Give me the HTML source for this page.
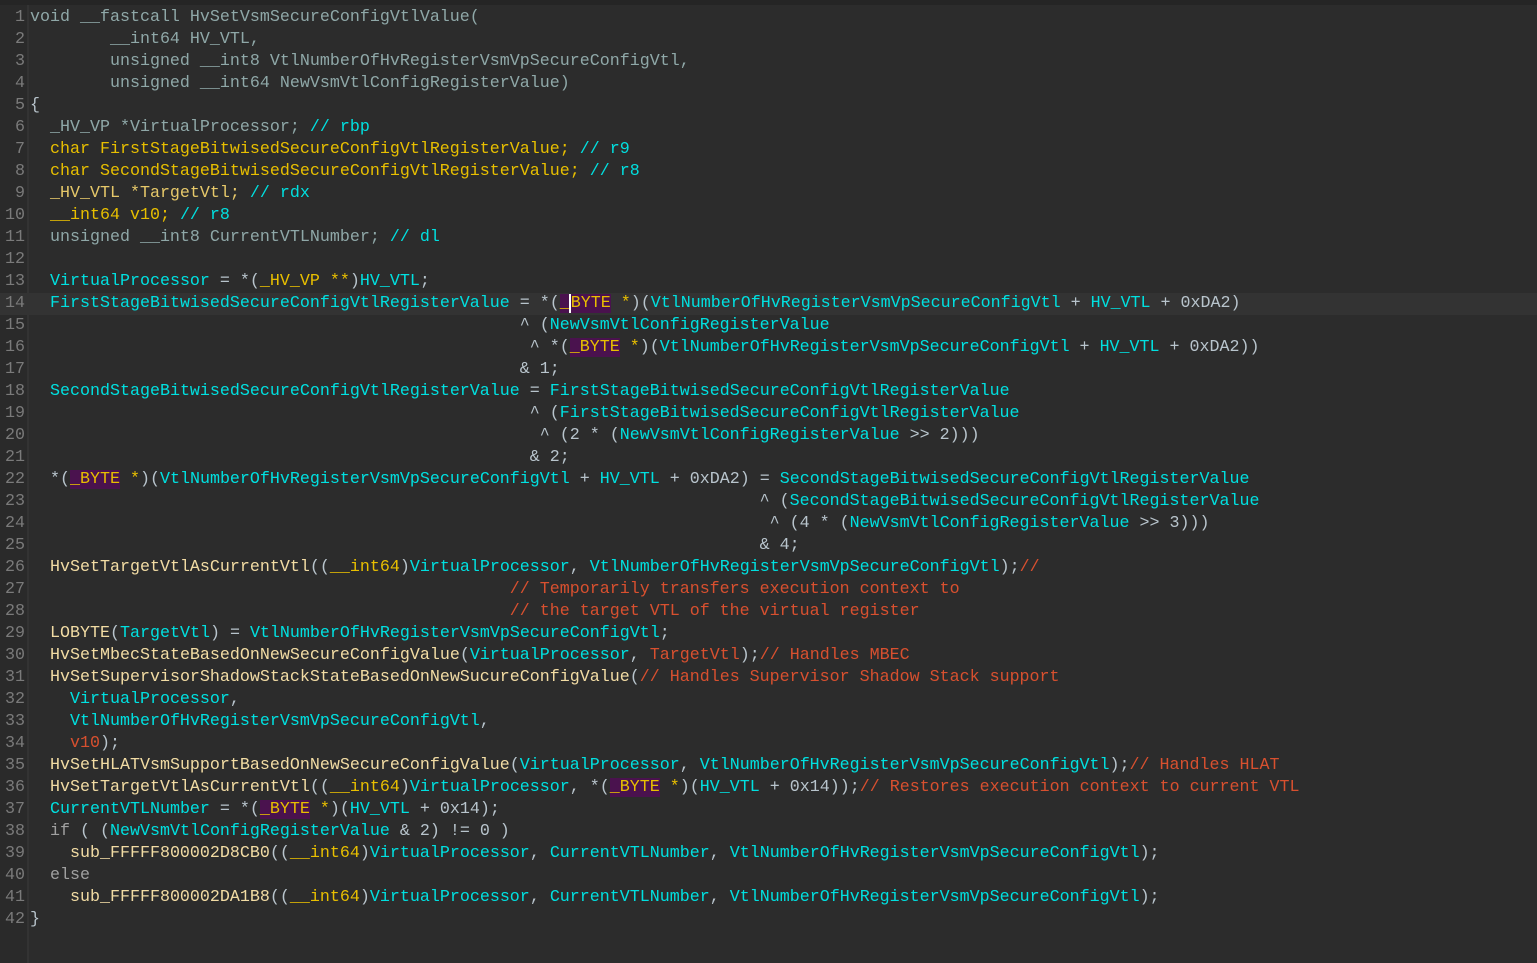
<!DOCTYPE html>
<html><head><meta charset="utf-8"><style>
html,body{margin:0;padding:0;background:#2c2c2c;width:1537px;height:963px;overflow:hidden}
.top{position:absolute;left:0;top:0;width:1537px;height:5px;background:#252525}
.gut{position:absolute;left:0;top:5px;width:27px;height:958px;background:#2a2a2a;border-right:2px solid #333}
.code{position:absolute;left:0;top:7px;font-family:"Liberation Mono",monospace;font-size:16.67px;line-height:22px;color:#c0c8cc}
.l{height:22px;position:relative;width:1537px;white-space:pre}
.l.hl{background:#333333}
.n{display:inline-block;width:25px;text-align:right;color:#7a7a7a;margin-right:5px}
.k{color:#8fa8a8}.v{color:#00e0e0}.f{color:#f2dca4}.t{color:#e8bf00}.y{color:#e6c86a}
.c{color:#d8502f}.p{color:#b8c4cc}.g{color:#a0a0a0}
.b{background:#4a124e;color:#e8bf00}
.cur{border-left:2px solid #fff;margin-left:-1px}
</style></head><body>
<div class="top"></div><div class="gut"></div>
<div class="code"><div class="l"><span class="n">1</span><span class="k">void __fastcall HvSetVsmSecureConfigVtlValue(</span></div><div class="l"><span class="n">2</span><span class="k">        __int64 HV_VTL,</span></div><div class="l"><span class="n">3</span><span class="k">        unsigned __int8 VtlNumberOfHvRegisterVsmVpSecureConfigVtl,</span></div><div class="l"><span class="n">4</span><span class="k">        unsigned __int64 NewVsmVtlConfigRegisterValue)</span></div><div class="l"><span class="n">5</span><span class="p">{</span></div><div class="l"><span class="n">6</span><span class="k">  _HV_VP *VirtualProcessor; </span><span class="v">// rbp</span></div><div class="l"><span class="n">7</span><span class="t">  char FirstStageBitwisedSecureConfigVtlRegisterValue; </span><span class="v">// r9</span></div><div class="l"><span class="n">8</span><span class="t">  char SecondStageBitwisedSecureConfigVtlRegisterValue; </span><span class="v">// r8</span></div><div class="l"><span class="n">9</span><span class="y">  _HV_VTL *TargetVtl; </span><span class="v">// rdx</span></div><div class="l"><span class="n">10</span><span class="t">  __int64 v10; </span><span class="v">// r8</span></div><div class="l"><span class="n">11</span><span class="k">  unsigned __int8 CurrentVTLNumber; </span><span class="v">// dl</span></div><div class="l"><span class="n">12</span></div><div class="l"><span class="n">13</span>  <span class="v">VirtualProcessor</span><span class="p"> = *(</span><span class="t">_HV_VP **</span><span class="p">)</span><span class="v">HV_VTL</span><span class="p">;</span></div><div class="l hl"><span class="n">14</span>  <span class="v">FirstStageBitwisedSecureConfigVtlRegisterValue</span><span class="p"> = *(</span><span class="b">_<span class="cur"></span>BYTE</span><span class="t"> *</span><span class="p">)(</span><span class="v">VtlNumberOfHvRegisterVsmVpSecureConfigVtl</span><span class="p"> + </span><span class="v">HV_VTL</span><span class="p"> + 0xDA2)</span></div><div class="l"><span class="n">15</span><span class="p">                                                 ^ (</span><span class="v">NewVsmVtlConfigRegisterValue</span></div><div class="l"><span class="n">16</span><span class="p">                                                  ^ *(</span><span class="b">_BYTE</span><span class="t"> *</span><span class="p">)(</span><span class="v">VtlNumberOfHvRegisterVsmVpSecureConfigVtl</span><span class="p"> + </span><span class="v">HV_VTL</span><span class="p"> + 0xDA2))</span></div><div class="l"><span class="n">17</span><span class="p">                                                 &amp; 1;</span></div><div class="l"><span class="n">18</span>  <span class="v">SecondStageBitwisedSecureConfigVtlRegisterValue</span><span class="p"> = </span><span class="v">FirstStageBitwisedSecureConfigVtlRegisterValue</span></div><div class="l"><span class="n">19</span><span class="p">                                                  ^ (</span><span class="v">FirstStageBitwisedSecureConfigVtlRegisterValue</span></div><div class="l"><span class="n">20</span><span class="p">                                                   ^ (2 * (</span><span class="v">NewVsmVtlConfigRegisterValue</span><span class="p"> &gt;&gt; 2)))</span></div><div class="l"><span class="n">21</span><span class="p">                                                  &amp; 2;</span></div><div class="l"><span class="n">22</span><span class="p">  *(</span><span class="b">_BYTE</span><span class="t"> *</span><span class="p">)(</span><span class="v">VtlNumberOfHvRegisterVsmVpSecureConfigVtl</span><span class="p"> + </span><span class="v">HV_VTL</span><span class="p"> + 0xDA2) = </span><span class="v">SecondStageBitwisedSecureConfigVtlRegisterValue</span></div><div class="l"><span class="n">23</span><span class="p">                                                                         ^ (</span><span class="v">SecondStageBitwisedSecureConfigVtlRegisterValue</span></div><div class="l"><span class="n">24</span><span class="p">                                                                          ^ (4 * (</span><span class="v">NewVsmVtlConfigRegisterValue</span><span class="p"> &gt;&gt; 3)))</span></div><div class="l"><span class="n">25</span><span class="p">                                                                         &amp; 4;</span></div><div class="l"><span class="n">26</span>  <span class="f">HvSetTargetVtlAsCurrentVtl</span><span class="p">((</span><span class="t">__int64</span><span class="p">)</span><span class="v">VirtualProcessor</span><span class="p">, </span><span class="v">VtlNumberOfHvRegisterVsmVpSecureConfigVtl</span><span class="p">);</span><span class="c">//</span></div><div class="l"><span class="n">27</span><span class="c">                                                // Temporarily transfers execution context to</span></div><div class="l"><span class="n">28</span><span class="c">                                                // the target VTL of the virtual register</span></div><div class="l"><span class="n">29</span>  <span class="f">LOBYTE</span><span class="p">(</span><span class="v">TargetVtl</span><span class="p">) = </span><span class="v">VtlNumberOfHvRegisterVsmVpSecureConfigVtl</span><span class="p">;</span></div><div class="l"><span class="n">30</span>  <span class="f">HvSetMbecStateBasedOnNewSecureConfigValue</span><span class="p">(</span><span class="v">VirtualProcessor</span><span class="p">, </span><span class="c">TargetVtl</span><span class="p">);</span><span class="c">// Handles MBEC</span></div><div class="l"><span class="n">31</span>  <span class="f">HvSetSupervisorShadowStackStateBasedOnNewSucureConfigValue</span><span class="p">(</span><span class="c">// Handles Supervisor Shadow Stack support</span></div><div class="l"><span class="n">32</span>    <span class="v">VirtualProcessor</span><span class="p">,</span></div><div class="l"><span class="n">33</span>    <span class="v">VtlNumberOfHvRegisterVsmVpSecureConfigVtl</span><span class="p">,</span></div><div class="l"><span class="n">34</span>    <span class="c">v10</span><span class="p">);</span></div><div class="l"><span class="n">35</span>  <span class="f">HvSetHLATVsmSupportBasedOnNewSecureConfigValue</span><span class="p">(</span><span class="v">VirtualProcessor</span><span class="p">, </span><span class="v">VtlNumberOfHvRegisterVsmVpSecureConfigVtl</span><span class="p">);</span><span class="c">// Handles HLAT</span></div><div class="l"><span class="n">36</span>  <span class="f">HvSetTargetVtlAsCurrentVtl</span><span class="p">((</span><span class="t">__int64</span><span class="p">)</span><span class="v">VirtualProcessor</span><span class="p">, *(</span><span class="b">_BYTE</span><span class="t"> *</span><span class="p">)(</span><span class="v">HV_VTL</span><span class="p"> + 0x14));</span><span class="c">// Restores execution context to current VTL</span></div><div class="l"><span class="n">37</span>  <span class="v">CurrentVTLNumber</span><span class="p"> = *(</span><span class="b">_BYTE</span><span class="t"> *</span><span class="p">)(</span><span class="v">HV_VTL</span><span class="p"> + 0x14);</span></div><div class="l"><span class="n">38</span>  <span class="g">if</span><span class="p"> ( (</span><span class="v">NewVsmVtlConfigRegisterValue</span><span class="p"> &amp; 2) != 0 )</span></div><div class="l"><span class="n">39</span>    <span class="f">sub_FFFFF800002D8CB0</span><span class="p">((</span><span class="t">__int64</span><span class="p">)</span><span class="v">VirtualProcessor</span><span class="p">, </span><span class="v">CurrentVTLNumber</span><span class="p">, </span><span class="v">VtlNumberOfHvRegisterVsmVpSecureConfigVtl</span><span class="p">);</span></div><div class="l"><span class="n">40</span>  <span class="g">else</span></div><div class="l"><span class="n">41</span>    <span class="f">sub_FFFFF800002DA1B8</span><span class="p">((</span><span class="t">__int64</span><span class="p">)</span><span class="v">VirtualProcessor</span><span class="p">, </span><span class="v">CurrentVTLNumber</span><span class="p">, </span><span class="v">VtlNumberOfHvRegisterVsmVpSecureConfigVtl</span><span class="p">);</span></div><div class="l"><span class="n">42</span><span class="p">}</span></div></div>
</body></html>
